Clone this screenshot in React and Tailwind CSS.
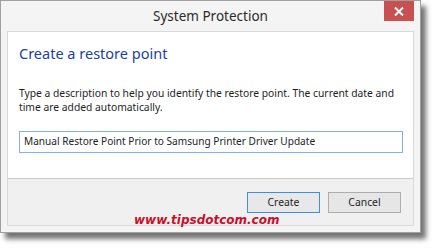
export default function App() {
  return (
    <div className="w-[436px] h-[249px] bg-white overflow-hidden" style={{ fontFamily: '"Noto Sans", "Open Sans", sans-serif' }}>
      <div className="relative w-[421px] h-[233px] border border-[#a0a0a0] bg-[#f4f4f4] shadow-[5px_6px_5px_rgba(0,0,0,0.55)] flex flex-col">
        {/* title bar */}
        <div className="h-[30px] flex items-center justify-center text-[13.5px] text-[#2b2b2b]">System Protection</div>
        <button className="absolute top-0 right-[6px] w-[30px] h-[20px] bg-[#c75050] flex items-center justify-center">
          <svg width="10" height="9" viewBox="0 0 10 9">
            <path d="M1 0.5 L9 8.5 M9 0.5 L1 8.5" stroke="white" strokeWidth="2" />
          </svg>
        </button>

        {/* inner panel */}
        <div className="mx-[6px] h-[195px] border border-[#d9d9d9] flex flex-col">
          <div className="bg-white h-[146px] px-[11px] pt-[11px] flex flex-col">
            <div className="text-[14.5px] leading-[20px] text-[#1c3fa6]">Create a restore point</div>
            <p className="mt-[23px] text-[10.3px] leading-[14px] text-[#1e1e1e]">
              Type a description to help you identify the restore point. The current date and
              time are added automatically.
            </p>
            <div className="mt-[17px] w-[384px] h-[22px] border border-[#7eb4ea] flex items-center px-[4px] text-[10.1px] text-[#1e1e1e]">
              Manual Restore Point Prior to Samsung Printer Driver Update
            </div>
          </div>
          <div className="relative flex-1 border-t border-[#c8c8c8] bg-[#f0f0f0] flex justify-end items-start pt-[13px] pr-[12px] gap-[8px]">
            <button className="w-[73px] h-[21px] border border-[#3c8ee6] bg-[#e8e8e8] text-[10.4px] text-[#1e1e1e]">Create</button>
            <button className="w-[73px] h-[21px] border border-[#adadad] bg-[#e6e6e6] text-[10.4px] text-[#1e1e1e]">Cancel</button>
            <div className="absolute left-[126px] top-[34px] text-[12px] font-bold italic text-[#c8102e] leading-[14px]" style={{ fontFamily: '"DejaVu Sans", sans-serif' }}>
              www.tipsdotcom.com
            </div>
          </div>
        </div>
      </div>
    </div>
  );
}
